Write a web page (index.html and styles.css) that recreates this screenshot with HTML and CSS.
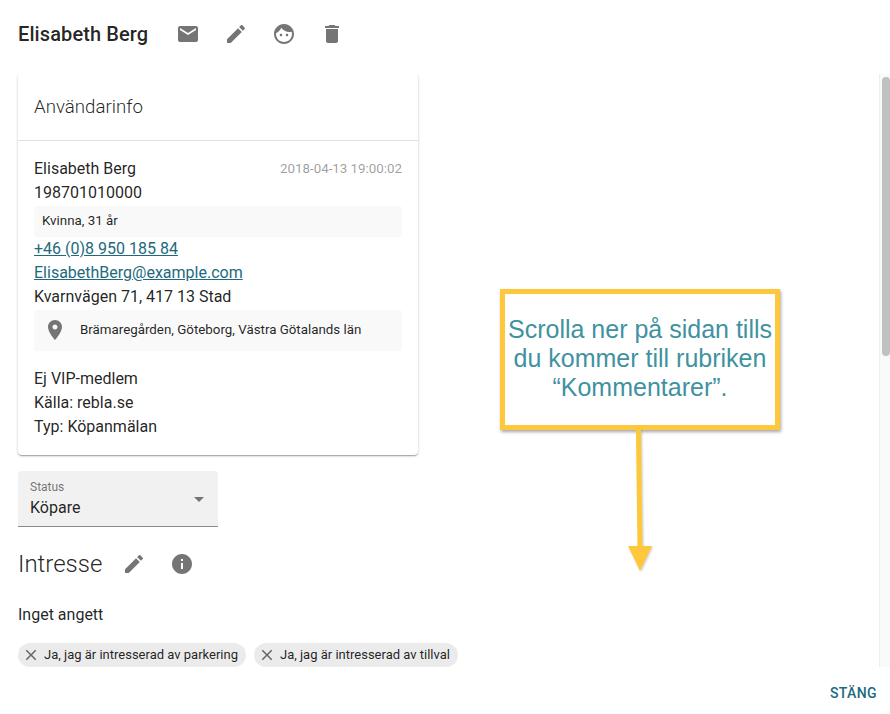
FILE: index.html
```html
<!DOCTYPE html>
<html lang="sv">
<head>
<meta charset="utf-8">
<title>Elisabeth Berg</title>
<link rel="stylesheet" href="styles.css">
</head>
<body>
<div class="dialog">
  <header class="dialog-head">
    <h1 class="dialog-title">Elisabeth Berg</h1>
    <div class="head-icons">
      <span class="icon-btn"><svg class="icon" viewBox="0 0 24 24"><path d="M20 4H4c-1.1 0-1.99.9-1.99 2L2 18c0 1.1.9 2 2 2h16c1.1 0 2-.9 2-2V6c0-1.1-.9-2-2-2zm0 4l-8 5-8-5V6l8 5 8-5v2z"/></svg></span>
      <span class="icon-btn"><svg class="icon" viewBox="0 0 24 24"><path d="M3 17.25V21h3.75L17.81 9.94l-3.75-3.75L3 17.25zM20.71 7.04c.39-.39.39-1.02 0-1.41l-2.34-2.34c-.39-.39-1.02-.39-1.41 0l-1.83 1.83 3.75 3.75 1.83-1.83z"/></svg></span>
      <span class="icon-btn"><svg class="icon" viewBox="0 0 24 24"><path d="M9 11.75c-.69 0-1.25.56-1.25 1.25s.56 1.25 1.25 1.25 1.25-.56 1.25-1.25-.56-1.25-1.25-1.25zm6 0c-.69 0-1.25.56-1.25 1.25s.56 1.25 1.25 1.25 1.25-.56 1.25-1.25-.56-1.25-1.25-1.25zM12 2C6.48 2 2 6.48 2 12s4.48 10 10 10 10-4.48 10-10S17.52 2 12 2zm0 18c-4.41 0-8-3.59-8-8 0-.29.02-.58.05-.86 2.36-1.05 4.23-2.98 5.21-5.37C11.07 8.33 14.05 10 17.42 10c.78 0 1.53-.09 2.25-.26.21.71.33 1.47.33 2.26 0 4.41-3.59 8-8 8z"/></svg></span>
      <span class="icon-btn"><svg class="icon" viewBox="0 0 24 24"><path d="M6 19c0 1.1.9 2 2 2h8c1.1 0 2-.9 2-2V7H6v12zM19 4h-3.5l-1-1h-5l-1 1H5v2h14V4z"/></svg></span>
    </div>
  </header>

  <div class="dialog-body">
    <main class="content">
      <section class="card">
        <h2 class="card-title">Användarinfo</h2>
        <div class="card-body">
          <div class="name-row">
            <span>Elisabeth Berg</span>
            <span class="timestamp">2018-04-13 19:00:02</span>
          </div>
          <div>198701010000</div>
          <div class="note note-small">Kvinna, 31 år</div>
          <div><a class="link" href="#">+46 (0)8 950 185 84</a></div>
          <div><a class="link" href="#">ElisabethBerg@example.com</a></div>
          <div>Kvarnvägen 71, 417 13 Stad</div>
          <div class="note note-place">
            <svg class="icon" viewBox="0 0 24 24"><path d="M12 2C8.13 2 5 5.13 5 9c0 5.25 7 13 7 13s7-7.75 7-13c0-3.87-3.13-7-7-7zm0 9.5c-1.38 0-2.5-1.12-2.5-2.5s1.12-2.5 2.5-2.5 2.5 1.12 2.5 2.5-1.12 2.5-2.5 2.5z"/></svg>
            <span>Brämaregården, Göteborg, Västra Götalands län</span>
          </div>
          <div class="meta">
            <div>Ej VIP-medlem</div>
            <div>Källa: rebla.se</div>
            <div>Typ: Köpanmälan</div>
          </div>
        </div>
      </section>

      <div class="select">
        <div class="select-label">Status</div>
        <div class="select-value">Köpare</div>
        <span class="select-caret"></span>
      </div>

      <div class="section-head">
        <h2 class="section-title">Intresse</h2>
        <span class="icon-btn"><svg class="icon" viewBox="0 0 24 24"><path d="M3 17.25V21h3.75L17.81 9.94l-3.75-3.75L3 17.25zM20.71 7.04c.39-.39.39-1.02 0-1.41l-2.34-2.34c-.39-.39-1.02-.39-1.41 0l-1.83 1.83 3.75 3.75 1.83-1.83z"/></svg></span>
        <span class="icon-btn"><svg class="icon" viewBox="0 0 24 24"><path d="M12 2C6.48 2 2 6.48 2 12s4.48 10 10 10 10-4.48 10-10S17.52 2 12 2zm1 15h-2v-6h2v6zm0-8h-2V7h2v2z"/></svg></span>
      </div>

      <p class="empty">Inget angett</p>

      <div class="chips">
        <span class="chip"><svg class="chip-x" viewBox="0 0 24 24"><path d="M19 6.41L17.59 5 12 10.59 6.41 5 5 6.41 10.59 12 5 17.59 6.41 19 12 13.41 17.59 19 19 17.59 13.41 12z"/></svg>Ja, jag är intresserad av parkering</span>
        <span class="chip"><svg class="chip-x" viewBox="0 0 24 24"><path d="M19 6.41L17.59 5 12 10.59 6.41 5 5 6.41 10.59 12 5 17.59 6.41 19 12 13.41 17.59 19 19 17.59 13.41 12z"/></svg>Ja, jag är intresserad av tillval</span>
      </div>

      <aside class="callout">
        <div class="callout-box">Scrolla ner på sidan tills du kommer till rubriken “Kommentarer”.</div>
        <svg class="callout-arrow" viewBox="0 0 30 150" width="30" height="150">
          <path class="arrow-shape" d="M11 0h5l1.5 116h9.5L15 141 3 116h9.5z"/>
        </svg>
      </aside>
    </main>
    <div class="scrollbar"><div class="scrollbar-thumb"></div></div>
  </div>

  <footer class="dialog-foot">
    <a class="close-btn" href="#">STÄNG</a>
  </footer>
</div>
</body>
</html>
```
FILE: styles.css
```css
* { box-sizing: border-box; }
html, body { margin: 0; padding: 0; }
body {
  font-family: Roboto, "Liberation Sans", sans-serif;
  font-size: 16px;
  line-height: 24px;
  color: rgba(0, 0, 0, 0.87);
  background: #fff;
}
.dialog {
  width: 890px;
  height: 714px;
  display: flex;
  flex-direction: column;
  overflow: hidden;
}
.dialog-head {
  height: 74px;
  flex: none;
  display: flex;
  align-items: center;
  padding: 0 0 6px 18px;
}
.dialog-title {
  margin: 0;
  width: 146px;
  font-size: 20px;
  font-weight: 500;
  line-height: 28px;
  letter-spacing: 0.1px;
}
.head-icons { display: flex; }
.icon-btn {
  width: 48px;
  height: 48px;
  display: flex;
  align-items: center;
  justify-content: center;
}
.icon { width: 24px; height: 24px; fill: #757575; flex: none; }

.dialog-body {
  flex: 1;
  min-height: 0;
  display: flex;
}
.content {
  position: relative;
  flex: 1;
  overflow: hidden;
  padding: 0 0 0 18px;
}
.scrollbar {
  width: 11px;
  flex: none;
  background: #fafafa;
  border-left: 1px solid #eeeeee;
  padding: 3px 0 0 2px;
}
.scrollbar-thumb {
  height: 279px;
  background: #c1c1c1;
  border-radius: 4px;
}

.card {
  width: 400px;
  border-radius: 4px;
  background: #fff;
  box-shadow: 0 1px 3px rgba(0,0,0,.2), 0 1px 1px rgba(0,0,0,.14), 0 2px 1px -1px rgba(0,0,0,.12);
}
.card-title {
  margin: 0;
  height: 67px;
  padding: 0 16px;
  display: flex;
  align-items: center;
  font-size: 18.7px;
  font-weight: 300;
  border-bottom: 1px solid #e0e0e0;
}
.card-body { padding: 16px 16px 16px; }
.name-row { display: flex; justify-content: space-between; align-items: center; }
.timestamp { font-size: 13.33px; color: rgba(0,0,0,.4); }
.note {
  background: #f8f9f8;
  border-radius: 3px;
  font-size: 13.33px;
}
.note-small {
  height: 31px;
  margin: 1px 0 0;
  padding: 0 8px 2px;
  display: flex;
  align-items: center;
}
.note-place {
  height: 41px;
  margin: 1px 0 0;
  padding: 0 0 2px 9px;
  display: flex;
  align-items: center;
  gap: 13px;
}
.link { color: #1d6a7e; text-decoration: underline; }
.meta { margin-top: 16px; }

.select {
  position: relative;
  width: 200px;
  height: 56px;
  margin-top: 16px;
  padding: 9px 12px 0;
  background: #f0f1f0;
  border-radius: 4px 4px 0 0;
  border-bottom: 1px solid #8a8a8a;
}
.select-label { font-size: 12px; line-height: 14px; color: rgba(0,0,0,.54); }
.select-value { margin-top: 2px; line-height: 24px; }
.select-caret {
  position: absolute;
  right: 14px;
  top: 26px;
  width: 0;
  height: 0;
  border-left: 5px solid transparent;
  border-right: 5px solid transparent;
  border-top: 5px solid #757575;
}

.section-head {
  display: flex;
  align-items: center;
  height: 48px;
  margin-top: 13px;
}
.section-title {
  margin: 0;
  width: 92px;
  font-size: 24px;
  font-weight: 300;
  line-height: 32px;
}
.empty { margin: 15px 0 0; }
.chips { display: flex; gap: 8px; margin-top: 16px; }
.chip {
  height: 24px;
  display: inline-flex;
  align-items: center;
  padding: 0 8px 0 4px;
  gap: 4px;
  border-radius: 12px;
  background: #ebebeb;
  font-size: 13px;
  letter-spacing: 0;
}
.chip-x { width: 18px; height: 18px; fill: #666; flex: none; }

.callout {
  position: absolute;
  left: 500px;
  top: 215px;
  width: 280px;
}
.callout-box {
  height: 141px;
  padding: 0 2px 3px;
  display: flex;
  align-items: center;
  justify-content: center;
  text-align: center;
  font-family: "Liberation Sans", Arial, sans-serif;
  font-size: 25px;
  line-height: 29px;
  color: #3f929f;
  background: #fff;
  border: 5px solid #fdc83c;
  box-shadow: 1px 2px 3px rgba(0,0,0,.35);
}
.callout-arrow { display: block; margin-left: 125px; overflow: visible; }
.arrow-shape { fill: #fdc83c; filter: drop-shadow(1px 1px 1px rgba(0,0,0,.2)); }

.dialog-foot {
  height: 47px;
  flex: none;
  display: flex;
  justify-content: flex-end;
  align-items: center;
  padding: 5px 13px 0 0;
}
.close-btn {
  font-size: 14px;
  font-weight: 500;
  letter-spacing: 0.4px;
  color: #1d6a7e;
  text-decoration: none;
}
```
